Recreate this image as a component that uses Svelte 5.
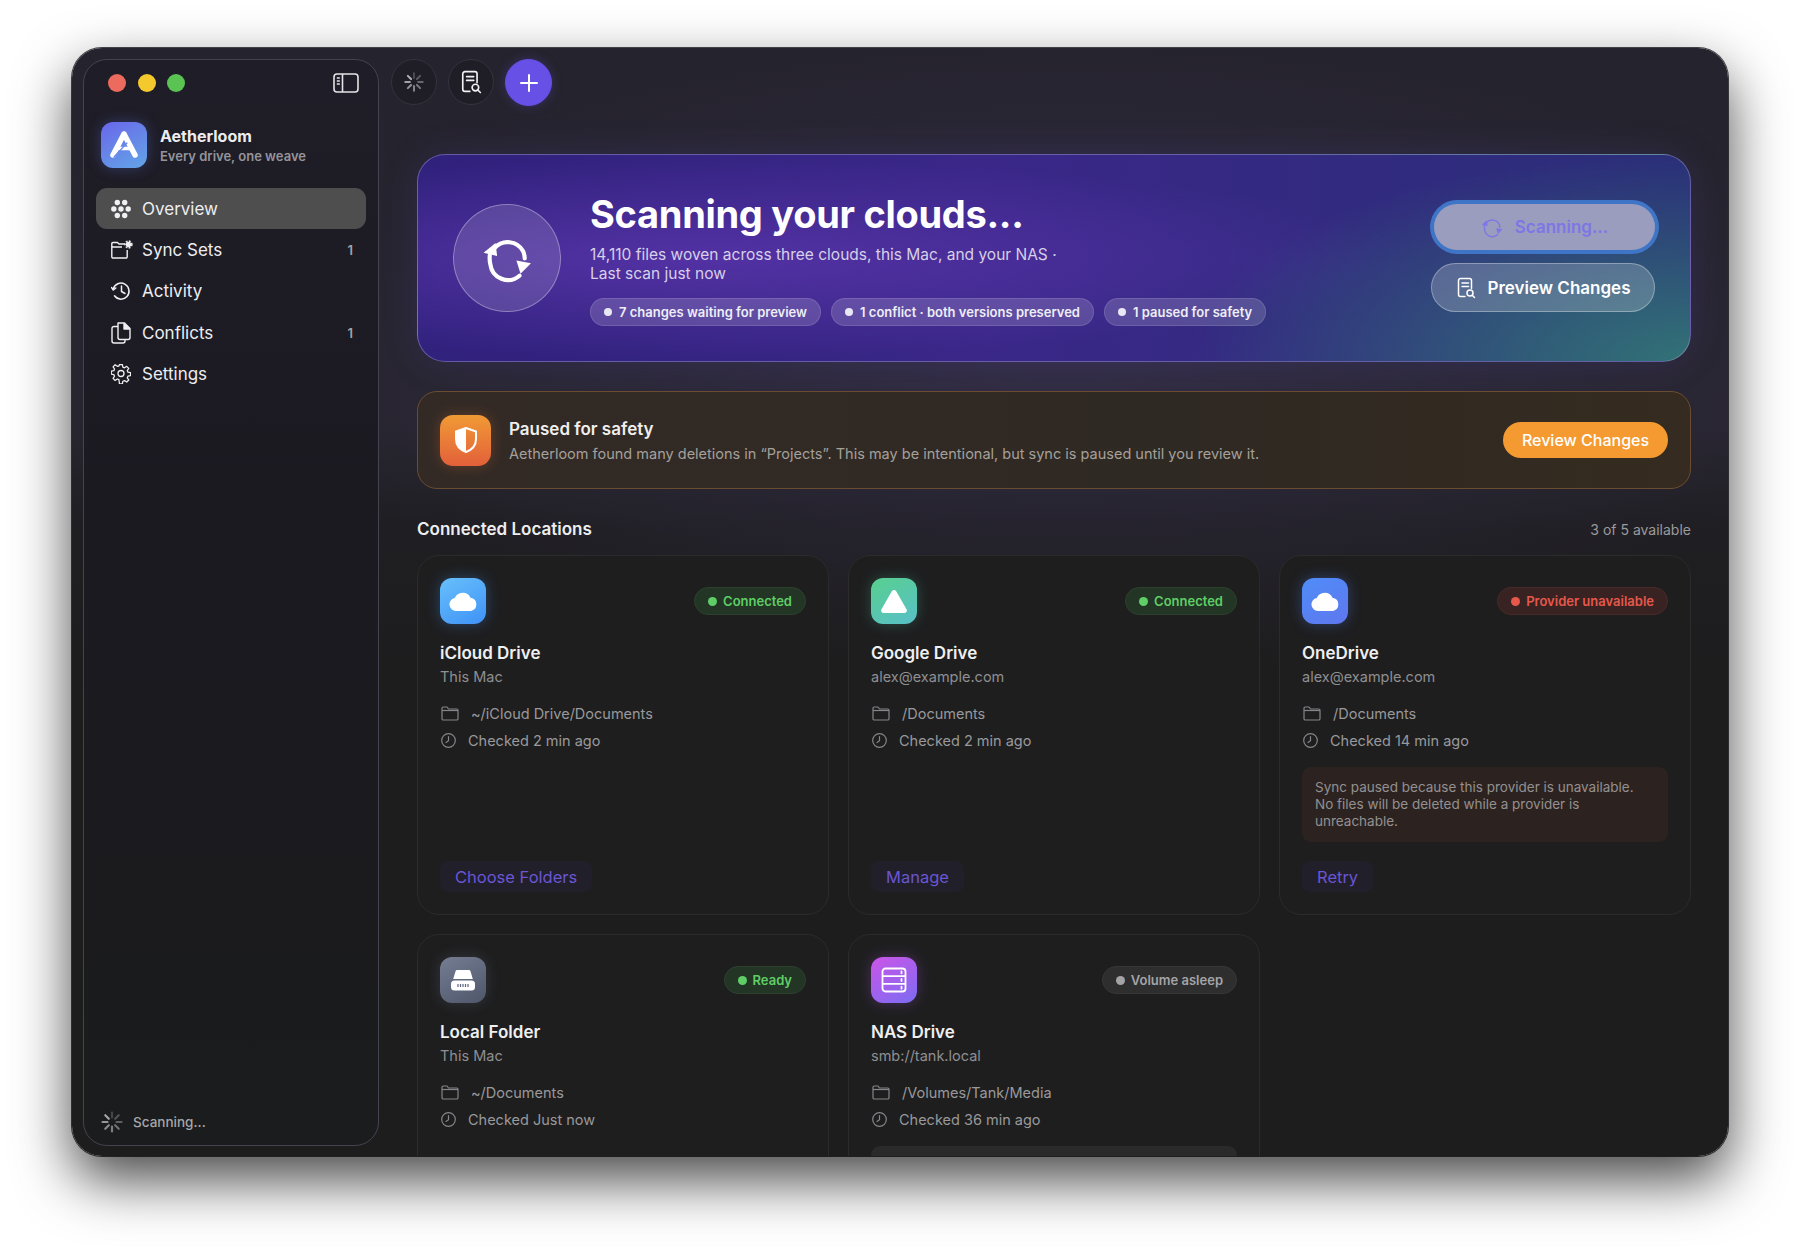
<script>
  const spokes = [0, 45, 90, 135, 180, 225, 270, 315];

  const navItems = [
    { label: "Overview", icon: "overview", active: true },
    { label: "Sync Sets", icon: "syncsets", count: 1 },
    { label: "Activity", icon: "activity" },
    { label: "Conflicts", icon: "conflicts", count: 1 },
    { label: "Settings", icon: "settings" }
  ];

  const chips = [
    "7 changes waiting for preview",
    "1 conflict · both versions preserved",
    "1 paused for safety"
  ];

  const locations = [
    { name: "iCloud Drive", sub: "This Mac", path: "~/iCloud Drive/Documents", checked: "Checked 2 min ago", status: "Connected", tone: "green", icon: "cloud", tile: "icloud", action: "Choose Folders" },
    { name: "Google Drive", sub: "alex@example.com", path: "/Documents", checked: "Checked 2 min ago", status: "Connected", tone: "green", icon: "triangle", tile: "gdrive", action: "Manage" },
    { name: "OneDrive", sub: "alex@example.com", path: "/Documents", checked: "Checked 14 min ago", status: "Provider unavailable", tone: "red", icon: "cloud", tile: "onedrive", action: "Retry", note: "Sync paused because this provider is unavailable. No files will be deleted while a provider is unreachable.", noteTone: "warm" },
    { name: "Local Folder", sub: "This Mac", path: "~/Documents", checked: "Checked Just now", status: "Ready", tone: "green", icon: "disk", tile: "local", action: "Open" },
    { name: "NAS Drive", sub: "smb://tank.local", path: "/Volumes/Tank/Media", checked: "Checked 36 min ago", status: "Volume asleep", tone: "gray", icon: "server", tile: "nas", action: "Wake", note: "This volume is asleep. Sync resumes when it wakes.", noteTone: "plain" }
  ];
</script>

{#snippet spinner(size)}
  <svg width={size} height={size} viewBox="0 0 24 24" fill="none" stroke="currentColor" stroke-width="2.2" stroke-linecap="round">
    {#each spokes as angle, i}
      <line x1="12" y1="2.5" x2="12" y2="7.5" transform="rotate({angle} 12 12)" opacity={0.3 + i * 0.1} />
    {/each}
  </svg>
{/snippet}

{#snippet reviewDoc(size)}
  <svg width={size} height={size * 1.1} viewBox="0 0 20 22" fill="none" stroke="currentColor" stroke-width="1.5" stroke-linecap="round" stroke-linejoin="round">
    <path d="M9 19.5H4.5A2 2 0 0 1 2.5 17.500V3.500A2 2 0 0 1 4.500 1.500h9a2 2 0 0 1 2 2v8" />
    <path d="M6 6h6.500M6 9.500h6.500" />
    <circle cx="14" cy="16" r="3" />
    <path d="M16.200 18.200 18.500 20.500" />
  </svg>
{/snippet}

{#snippet syncArrows(size, width)}
  <svg width={size} height={size} viewBox="0 0 48 48" fill="none" stroke="currentColor" stroke-width={width} stroke-linecap="round">
    <path d="M12 14.500A17 17 0 0 1 39.500 17.500Q41 21 41 24.500" />
    <path d="M36 41A17 17 0 0 1 8 30Q7 26 7.500 21" />
    <path d="M1.500 19 13 9.500 14.500 22Z" fill="currentColor" stroke="none" />
    <path d="M33 26.500 47 29 37 39Z" fill="currentColor" stroke="none" />
  </svg>
{/snippet}

{#snippet navIcon(name)}
  {#if name === "overview"}
    <svg width="20" height="20" viewBox="0 0 20 20" fill="currentColor">
      <circle cx="6.300" cy="3.500" r="2.700" /><circle cx="13.700" cy="3.500" r="2.700" />
      <circle cx="2.800" cy="10" r="2.700" /><circle cx="10" cy="10" r="2.700" /><circle cx="17.200" cy="10" r="2.700" />
      <circle cx="6.300" cy="16.500" r="2.700" /><circle cx="13.700" cy="16.500" r="2.700" />
    </svg>
  {:else if name === "syncsets"}
    <svg width="22" height="20" viewBox="0 0 22 20" fill="none" stroke="currentColor" stroke-width="1.400" stroke-linejoin="round">
      <path d="M14 4H8L6.500 2.500H2A1.200 1.200 0 0 0 .8 3.700V16.800A1.200 1.200 0 0 0 2 18H15A1.200 1.200 0 0 0 16.200 16.800V10" />
      <path d="M.8 7H11" />
      <circle cx="17.500" cy="4.500" r="2" fill="currentColor" />
      <circle cx="17.500" cy="4.500" r="3.400" stroke-dasharray="1.800 1.400" stroke-width="1.500" />
    </svg>
  {:else if name === "activity"}
    <svg width="20" height="20" viewBox="0 0 20 20" fill="none" stroke="currentColor" stroke-width="1.500" stroke-linecap="round" stroke-linejoin="round">
      <path d="M2.300 8A8 8 0 1 1 3.500 14.800" />
      <path d="M.5 6.500 2.300 9 4.800 7" />
      <path d="M10.500 5v5.500l3.500 2" />
    </svg>
  {:else if name === "conflicts"}
    <svg width="20" height="22" viewBox="0 0 20 22" fill="none" stroke="currentColor" stroke-width="1.400" stroke-linejoin="round">
      <path d="M7 4.500H3A2 2 0 0 0 1 6.500V19A2 2 0 0 0 3 21h9a2 2 0 0 0 2-2v-1.500" />
      <path d="M7 1h6.500L19 6.500V15.500A2 2 0 0 1 17 17.500H9a2 2 0 0 1-2-2Z" />
      <path d="M13 1.500V7h5.500Z" fill="currentColor" />
    </svg>
  {:else}
    <svg width="20" height="20" viewBox="0 0 20 20" fill="none" stroke="currentColor" stroke-width="1.300" stroke-linejoin="round">
      <path d="M8.500 1h3l.5 2.600 1.700.7 2.200-1.500 2.100 2.100-1.500 2.200.7 1.700 2.600.5v3l-2.600.5-.7 1.700 1.500 2.200-2.100 2.100-2.200-1.500-1.700.7-.5 2.600h-3L8 16.400l-1.700-.7-2.200 1.500L2 15.100l1.500-2.200-.7-1.700L.2 10.700v-3l2.600-.5.7-1.700L2 3.300l2.100-2.100 2.200 1.500L8 2.600Z" transform="translate(.1 -.4) scale(.98)" />
      <circle cx="10" cy="9.500" r="3" />
    </svg>
  {/if}
{/snippet}

{#snippet tileIcon(name)}
  {#if name === "cloud"}
    <svg width="29" height="20" viewBox="0 0 29 20" fill="#fff">
      <path d="M7 20A6.500 6.500 0 0 1 5.800 7.100 8.500 8.500 0 0 1 21.500 6.800 6.700 6.700 0 0 1 22 20Z" />
    </svg>
  {:else if name === "triangle"}
    <svg width="28" height="24" viewBox="0 0 28 24" fill="#fff">
      <path d="M11.800 2.200a2.500 2.500 0 0 1 4.400 0l10.300 18a2.500 2.500 0 0 1-2.200 3.800H3.700a2.500 2.500 0 0 1-2.200-3.800Z" />
    </svg>
  {:else if name === "disk"}
    <svg width="26" height="22" viewBox="0 0 26 22" fill="#fff">
      <path d="M7 1h12a1.500 1.500 0 0 1 1.400 1l2.400 8H3.200L5.600 2A1.500 1.500 0 0 1 7 1Z" />
      <rect x="1" y="11.500" width="24" height="10" rx="3.500" />
      <path d="M8 15v3M10.500 15v3M13 15v3M15.500 15v3M18 15v3" stroke="#5b6478" stroke-width="1.200" />
    </svg>
  {:else}
    <svg width="26" height="26" viewBox="0 0 26 26" fill="none" stroke="#fff" stroke-width="1.800">
      <rect x="1.500" y="1.500" width="23" height="23" rx="3" />
      <path d="M1.500 9.200h23M1.500 16.800h23" />
      <path d="M20.500 4.300v2M20.500 12v2M20.500 19.700v2" stroke-linecap="round" />
    </svg>
  {/if}
{/snippet}

<div class="page">
  <div class="window">
    <aside class="sidebar">
      <div class="traffic">
        <span class="light red"></span>
        <span class="light yellow"></span>
        <span class="light green"></span>
        <svg class="panel-toggle" width="26" height="20" viewBox="0 0 26 20" fill="none" stroke="currentColor" stroke-width="1.600">
          <rect x="1" y="1" width="24" height="18" rx="3" />
          <path d="M9.500 1v18" />
          <path d="M3.800 5h3M3.800 8h3M3.800 11h3" stroke-width="1.300" />
        </svg>
      </div>

      <div class="brand">
        <div class="logo">
          <svg width="30" height="30" viewBox="0 0 30 30" fill="none" stroke="#fff" stroke-linecap="round" stroke-linejoin="round">
            <path d="M15 4 26 25M15 4 4 25" stroke-width="5.500" />
            <path d="M9 18.500H22" stroke-width="3.500" />
            <path d="M5 27 18 13" stroke="#6b8ae8" stroke-width="1.200" />
          </svg>
        </div>
        <div class="brand-text">
          <div class="brand-name">Aetherloom</div>
          <div class="brand-tag">Every drive, one weave</div>
        </div>
      </div>

      <nav class="nav">
        {#each navItems as item}
          <div class="nav-item" class:active={item.active}>
            <span class="nav-icon">{@render navIcon(item.icon)}</span>
            <span class="nav-label">{item.label}</span>
            {#if item.count}<span class="nav-count">{item.count}</span>{/if}
          </div>
        {/each}
      </nav>

      <div class="side-status">
        {@render spinner(24)}
        <span>Scanning...</span>
      </div>
    </aside>

    <main class="main">
      <div class="toolbar">
        <button class="round spin">{@render spinner(22)}</button>
        <button class="round">{@render reviewDoc(22)}</button>
        <button class="round plus" aria-label="Add">
          <svg width="20" height="20" viewBox="0 0 20 20" stroke="#fff" stroke-width="2" stroke-linecap="round"><path d="M10 2v16M2 10h16" /></svg>
        </button>
      </div>

      <section class="hero">
        <div class="hero-disc">{@render syncArrows(50, 4)}</div>
        <div class="hero-text">
          <h1>Scanning your clouds...</h1>
          <p>14,110 files woven across three clouds, this Mac, and your NAS ·<br />Last scan just now</p>
          <div class="chips">
            {#each chips as chip}
              <span class="chip"><i></i>{chip}</span>
            {/each}
          </div>
        </div>
        <div class="hero-actions">
          <button class="pill scanning">{@render syncArrows(22, 3)}<span>Scanning...</span></button>
          <button class="pill preview">{@render reviewDoc(20)}<span>Preview Changes</span></button>
        </div>
      </section>

      <section class="alert">
        <div class="alert-icon">
          <svg width="22" height="26" viewBox="0 0 22 26">
            <path d="M11 1 21 4.500V12C21 18.500 16.500 23 11 25 5.500 23 1 18.500 1 12V4.500Z" fill="none" stroke="#fff" stroke-width="2" stroke-linejoin="round" />
            <path d="M11 1 1 4.500V12C1 18.500 5.500 23 11 25Z" fill="#fff" />
          </svg>
        </div>
        <div class="alert-text">
          <div class="alert-title">Paused for safety</div>
          <div class="alert-sub">Aetherloom found many deletions in “Projects”. This may be intentional, but sync is paused until you review it.</div>
        </div>
        <button class="review">Review Changes</button>
      </section>

      <div class="section-head">
        <h2>Connected Locations</h2>
        <span>3 of 5 available</span>
      </div>

      <div class="grid">
        {#each locations as loc}
          <article class="card">
            <div class="card-top">
              <div class="tile {loc.tile}">{@render tileIcon(loc.icon)}</div>
              <span class="badge {loc.tone}"><i></i>{loc.status}</span>
            </div>
            <div class="card-name">{loc.name}</div>
            <div class="card-sub">{loc.sub}</div>
            <div class="meta first">
              <svg width="18" height="15" viewBox="0 0 18 15" fill="none" stroke="currentColor" stroke-width="1.200" stroke-linejoin="round">
                <path d="M1 3.500V2.300A1.300 1.300 0 0 1 2.300 1H6l1.500 2H15.700A1.300 1.300 0 0 1 17 4.300V12.700A1.300 1.300 0 0 1 15.700 14H2.300A1.300 1.300 0 0 1 1 12.700Z" />
                <path d="M1 4.500H17" />
              </svg>
              <span>{loc.path}</span>
            </div>
            <div class="meta">
              <svg class="clock" width="15" height="15" viewBox="0 0 15 15" fill="none" stroke="currentColor" stroke-width="1.200" stroke-linecap="round">
                <circle cx="7.500" cy="7.500" r="6.800" />
                <path d="M7.500 3.500v4.200L5 9.500" />
              </svg>
              <span>{loc.checked}</span>
            </div>
            {#if loc.note}
              <div class="note {loc.noteTone}">{loc.note}</div>
            {/if}
            <button class="action">{loc.action}</button>
          </article>
        {/each}
      </div>
    </main>
  </div>
</div>

<style>
  :global(body) {
    margin: 0;
    background: #fff;
  }

  .page {
    box-sizing: border-box;
    width: 1800px;
    height: 1252px;
    padding: 48px 72px 96px;
    font-family: Inter, "Liberation Sans", sans-serif;
    overflow: hidden;
  }

  .window {
    display: flex;
    height: 1108px;
    border-radius: 30px;
    overflow: hidden;
    box-shadow: 0 24px 56px rgba(0, 0, 0, 0.72), 0 0 0 1px #4a4a50;
    background:
      radial-gradient(ellipse 800px 320px at 60% 300px, rgba(72, 62, 110, 0.35), transparent),
      linear-gradient(#25232d 0, #27252f 380px, #1f1e22 480px, #1d1d1e 620px);
  }

  button {
    font-family: inherit;
    border: none;
    cursor: pointer;
  }

  .sidebar {
    box-sizing: border-box;
    flex: 0 0 296px;
    margin: 11px 0 10px 11px;
    display: flex;
    flex-direction: column;
    padding: 0 12px;
    border: 1px solid #45434f;
    border-radius: 24px;
    background: linear-gradient(#1f1d27 0, #1b1a21 40%, #1b1c1d 100%);
    color: #ededf0;
  }

  .traffic {
    display: flex;
    align-items: center;
    gap: 11.500px;
    height: 45px;
    padding: 0 4px 0 12px;
    margin-top: 0;
  }

  .light {
    width: 18px;
    height: 18px;
    border-radius: 50%;
  }
  .light.red { background: #ec6a5e; }
  .light.yellow { background: #f4c92e; }
  .light.green { background: #5ac354; }

  .panel-toggle {
    margin-left: auto;
    color: #e4e4e8;
    margin-right: 3px;
  }

  .brand {
    display: flex;
    align-items: center;
    gap: 13px;
    margin: 17px 0 20px 5px;
  }

  .logo {
    width: 46px;
    height: 46px;
    border-radius: 12px;
    display: flex;
    align-items: center;
    justify-content: center;
    background: linear-gradient(150deg, #6a66ea, #62a6e6);
    box-shadow: 0 0 14px rgba(92, 118, 232, 0.35);
  }

  .brand-name {
    font-size: 16px;
    font-weight: 700;
    line-height: 21px;
  }

  .brand-tag {
    font-size: 13px;
    font-weight: 600;
    line-height: 18px;
    color: #95949b;
  }

  .nav {
    display: flex;
    flex-direction: column;
  }

  .nav-item {
    display: flex;
    align-items: center;
    height: 41.300px;
    padding: 0 13px 0 15px;
    border-radius: 11px;
    font-size: 17px;
  }

  .nav-item.active {
    background: #4e4e4f;
  }

  .nav-icon {
    display: flex;
    justify-content: flex-start;
    width: 31px;
    color: #f0f0f2;
  }

  .nav-count {
    margin-left: auto;
    font-size: 13px;
    font-weight: 600;
    color: #a3a3a8;
  }

  .side-status {
    display: flex;
    align-items: center;
    gap: 9px;
    margin: auto 0 11px 4px;
    height: 24px;
    font-size: 13.500px;
    font-weight: 500;
    color: #a6a6a8;
  }

  .main {
    flex: 1;
    min-width: 0;
    padding: 11px 37px 0 38px;
    overflow: hidden;
  }

  .toolbar {
    display: flex;
    gap: 11px;
    margin-left: -26px;
    margin-bottom: 48px;
  }

  .round {
    display: flex;
    align-items: center;
    justify-content: center;
    width: 46px;
    height: 46px;
    border-radius: 50%;
    color: #f2f2f4;
    background: #1f1d25;
    border: 1px solid #35333e;
    padding: 0;
  }

  .round.spin {
    color: #b3b2b8;
  }

  .round.plus {
    width: 47px;
    height: 47px;
    background: #6650e6;
    border-color: #6650e6;
    box-shadow: 0 0 12px rgba(102, 80, 230, 0.3);
  }

  .hero {
    box-sizing: border-box;
    height: 208px;
    display: flex;
    align-items: center;
    padding: 0 35px;
    gap: 29px;
    border-radius: 28px;
    border: 1px solid rgba(170, 170, 220, 0.42);
    color: #fff;
    background:
      radial-gradient(ellipse 500px 210px at 100% 100%, rgba(50, 118, 118, 0.95), transparent),
      radial-gradient(ellipse 700px 100px at 22% 50%, rgba(88, 52, 170, 0.85), transparent),
      linear-gradient(92deg, #30217c 0, #3a2788 45%, #2a2d78 100%);
    box-shadow: 0 0 36px rgba(90, 70, 190, 0.18);
  }

  .hero-disc {
    flex: none;
    width: 108px;
    height: 108px;
    box-sizing: border-box;
    border-radius: 50%;
    display: flex;
    align-items: center;
    justify-content: center;
    background: rgba(255, 255, 255, 0.14);
    border: 1px solid rgba(255, 255, 255, 0.32);
  }

  .hero-text {
    flex: 1;
    min-width: 0;
  }

  h1 {
    margin: 0 0 8px;
    font-size: 38px;
    font-weight: 700;
    line-height: 46px;
    letter-spacing: -0.3px;
  }

  .hero-text p {
    margin: 0 0 15px;
    font-size: 15.500px;
    line-height: 19px;
    color: rgba(255, 255, 255, 0.78);
  }

  .chips {
    display: flex;
    gap: 10px;
  }

  .chip {
    display: flex;
    align-items: center;
    gap: 7px;
    box-sizing: border-box;
    height: 28px;
    padding: 0 13px;
    border-radius: 14px;
    font-size: 13px;
    font-weight: 600;
    color: #eeeef6;
    background: rgba(255, 255, 255, 0.16);
    border: 1px solid rgba(255, 255, 255, 0.12);
  }

  .chip i {
    width: 8px;
    height: 8px;
    border-radius: 50%;
    background: #e8e8f4;
  }

  .hero-actions {
    flex: none;
    display: flex;
    flex-direction: column;
    align-items: flex-end;
    gap: 13px;
  }

  .pill {
    display: flex;
    align-items: center;
    justify-content: center;
    gap: 12px;
    border-radius: 25px;
    font-size: 17px;
    font-weight: 600;
    padding: 0;
  }

  .pill.scanning {
    width: 221px;
    height: 46px;
    margin-right: 0;
    color: #7d76e6;
    background: #9a9dbd;
    box-shadow: 0 0 0 4px #3f75c6;
  }

  .pill.preview {
    width: 224px;
    height: 49px;
    color: #fff;
    background: rgba(255, 255, 255, 0.2);
    border: 1px solid rgba(255, 255, 255, 0.32);
  }

  .alert {
    box-sizing: border-box;
    height: 98px;
    margin-top: 29px;
    display: flex;
    align-items: center;
    gap: 18px;
    padding: 0 22px;
    border-radius: 20px;
    border: 1px solid #6b4c30;
    background: linear-gradient(90deg, #332a26, #2f2923 60%, #352b20);
  }

  .alert-icon {
    flex: none;
    width: 51px;
    height: 51px;
    border-radius: 13px;
    display: flex;
    align-items: center;
    justify-content: center;
    background: linear-gradient(#f19a35, #e2603a);
    box-shadow: 0 0 14px rgba(235, 120, 50, 0.28);
  }

  .alert-title {
    font-size: 17px;
    font-weight: 600;
    line-height: 24px;
    color: #f0eeec;
  }

  .alert-sub {
    font-size: 14.500px;
    line-height: 21px;
    color: #a5a09a;
    margin-top: 2px;
  }

  .review {
    flex: none;
    margin-left: auto;
    width: 165px;
    height: 36px;
    border-radius: 18px;
    font-size: 16px;
    font-weight: 500;
    color: #fff;
    background: #f49a31;
    padding: 0;
  }

  .section-head {
    display: flex;
    align-items: center;
    justify-content: space-between;
    height: 28px;
    margin: 26px 0 12px;
  }

  h2 {
    margin: 0;
    font-size: 17px;
    font-weight: 600;
    color: #eeeef0;
  }

  .section-head span {
    font-size: 14px;
    color: #9a9a9c;
  }

  .grid {
    display: grid;
    grid-template-columns: repeat(3, 1fr);
    grid-auto-rows: 360px;
    gap: 19px;
  }

  .card {
    box-sizing: border-box;
    display: flex;
    flex-direction: column;
    align-items: flex-start;
    padding: 22px;
    border-radius: 22px;
    border: 1px solid #2b2b2c;
    background: #1e1e1f;
  }

  .card-top {
    align-self: stretch;
    display: flex;
    align-items: center;
    justify-content: space-between;
  }

  .tile {
    width: 46px;
    height: 46px;
    border-radius: 12px;
    display: flex;
    align-items: center;
    justify-content: center;
  }
  .tile.icloud { background: linear-gradient(150deg, #67c0fb, #3f92f6); box-shadow: 0 0 14px rgba(70, 150, 245, 0.35); }
  .tile.gdrive { background: linear-gradient(150deg, #58cf8e, #58c0c8); box-shadow: 0 0 14px rgba(80, 200, 160, 0.28); }
  .tile.onedrive { background: linear-gradient(150deg, #4f8df8, #5f77ee); box-shadow: 0 0 14px rgba(80, 130, 245, 0.35); }
  .tile.local { background: linear-gradient(150deg, #747d92, #4e566a); box-shadow: 0 0 14px rgba(120, 130, 150, 0.25); }
  .tile.nas { background: linear-gradient(150deg, #cb55e8, #7c6cf2); box-shadow: 0 0 14px rgba(180, 90, 235, 0.3); }

  .badge {
    display: flex;
    align-items: center;
    gap: 6px;
    box-sizing: border-box;
    height: 28px;
    padding: 0 13px;
    border-radius: 14px;
    font-size: 13px;
    font-weight: 600;
    border: 1px solid;
  }

  .badge i {
    width: 9px;
    height: 9px;
    border-radius: 50%;
    background: currentColor;
  }

  .badge.green { color: #5fce66; background: #233524; border-color: #2c402d; }
  .badge.red { color: #e5584b; background: #382322; border-color: #472b29; }
  .badge.gray { color: #a4a4a6; background: #2e2e2f; border-color: #363637; }
  .badge.gray span { color: #a4a4a6; }

  .card-name {
    margin-top: 17px;
    font-size: 17px;
    font-weight: 600;
    line-height: 24px;
    color: #efeff0;
  }

  .card-sub {
    margin-top: 1px;
    font-size: 14.500px;
    line-height: 21px;
    color: #8f8f91;
  }

  .meta {
    display: flex;
    align-items: center;
    gap: 12px;
    height: 27px;
    font-size: 14.500px;
    color: #99999b;
  }

  .meta.first {
    margin-top: 13px;
  }

  .meta svg {
    flex: none;
    margin-left: 1px;
    color: #85858a;
  }

  .note {
    align-self: stretch;
    box-sizing: border-box;
    margin-top: 13px;
    padding: 12px 13px;
    border-radius: 9px;
    font-size: 13.500px;
    line-height: 17px;
    color: #949090;
  }

  .note.warm { background: #2c2320; }
  .note.plain { background: #2a2a2b; }

  .action {
    margin-top: auto;
    height: 31px;
    margin-bottom: 0;
    padding: 0 15px;
    border-radius: 8px;
    font-size: 16.500px;
    color: #6a55d4;
    background: #211f29;
  }
</style>
